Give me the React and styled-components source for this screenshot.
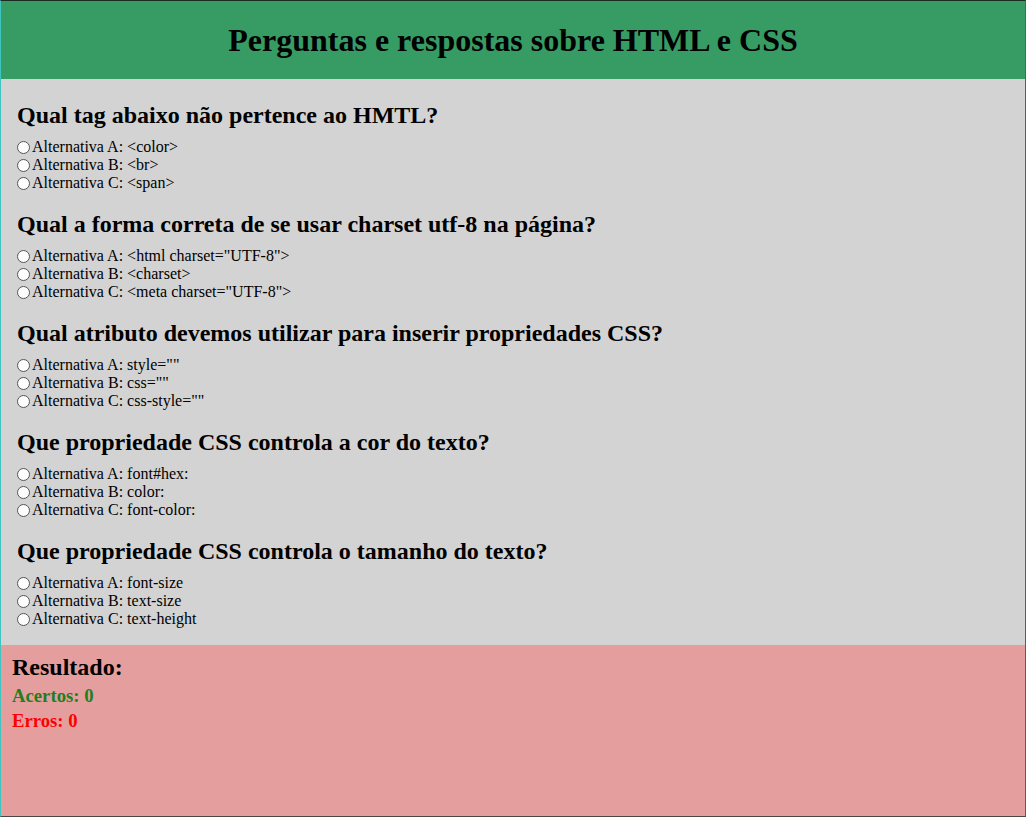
import React from 'react'
import styled, { createGlobalStyle } from 'styled-components'

const GlobalStyle = createGlobalStyle`
  html, body {
    margin: 0;
    padding: 0;
  }
  body {
    font-family: "Liberation Serif", "Times New Roman", serif;
    color: #000;
  }
  * {
    box-sizing: border-box;
  }
`;

const Page = styled.div`
  display: flex;
  flex-direction: column;
  min-height: 100vh;
  border-top: 1px solid #1b2b22;
  border-left: 1px solid #3fc3bf;
  border-right: 1px solid #5d5d5d;
  border-bottom: 1px solid #4c4541;
`;

const Header = styled.header`
  display: flex;
  align-items: center;
  justify-content: center;
  height: 78px;
  padding-bottom: 1px;
  background: #379c64;
`;

const Title = styled.h1`
  margin: 0;
  font-size: 32px;
  font-weight: bold;
  line-height: 1;
`;

const Questions = styled.main`
  display: flex;
  flex-direction: column;
  gap: 20px;
  padding: 24px 16px 17px;
  background: #d3d3d3;
`;

const Question = styled.section`
  display: flex;
  flex-direction: column;
`;

const QuestionTitle = styled.h2`
  margin: 0 0 10px;
  font-size: 24px;
  line-height: 25px;
  font-weight: bold;
`;

const Option = styled.label`
  display: flex;
  align-items: center;
  height: 18px;
  font-size: 16px;
  line-height: 18px;
`;

const Radio = styled.input`
  appearance: none;
  flex-shrink: 0;
  width: 13px;
  height: 13px;
  margin: 0 2px 0 0;
  border: 1px solid #555;
  border-radius: 50%;
  background: #fdfdfd;

  &:checked {
    background: radial-gradient(circle, #000 0 3px, #fdfdfd 3.5px);
  }
`;

const Result = styled.footer`
  flex: 1;
  display: flex;
  flex-direction: column;
  padding: 10px 11px;
  background: #e59e9e;
`;

const ResultTitle = styled.h2`
  margin: 0 0 3px;
  font-size: 24px;
  line-height: 25px;
  font-weight: bold;
`;

const Score = styled.p`
  margin: 0;
  font-size: 18.72px;
  line-height: 25px;
  font-weight: bold;
  color: ${props => props.color};
`;

const questions = [
  {
    title: 'Qual tag abaixo não pertence ao HMTL?',
    options: ['<color>', '<br>', '<span>']
  },
  {
    title: 'Qual a forma correta de se usar charset utf-8 na página?',
    options: ['<html charset="UTF-8">', '<charset>', '<meta charset="UTF-8">']
  },
  {
    title: 'Qual atributo devemos utilizar para inserir propriedades CSS?',
    options: ['style=""', 'css=""', 'css-style=""']
  },
  {
    title: 'Que propriedade CSS controla a cor do texto?',
    options: ['font#hex:', 'color:', 'font-color:']
  },
  {
    title: 'Que propriedade CSS controla o tamanho do texto?',
    options: ['font-size', 'text-size', 'text-height']
  }
];

const letters = ['A', 'B', 'C'];

export default function App() {
  return (
    <Page>
      <GlobalStyle />
      <Header>
        <Title>Perguntas e respostas sobre HTML e CSS</Title>
      </Header>
      <Questions>
        {questions.map((q, i) => (
          <Question key={q.title}>
            <QuestionTitle>{q.title}</QuestionTitle>
            {q.options.map((opt, j) => (
              <Option key={opt}>
                <Radio type="radio" name={`q${i}`} />
                Alternativa {letters[j]}: {opt}
              </Option>
            ))}
          </Question>
        ))}
      </Questions>
      <Result>
        <ResultTitle>Resultado:</ResultTitle>
        <Score color="#1f7f1f">Acertos: 0</Score>
        <Score color="#ff0000">Erros: 0</Score>
      </Result>
    </Page>
  )
}
